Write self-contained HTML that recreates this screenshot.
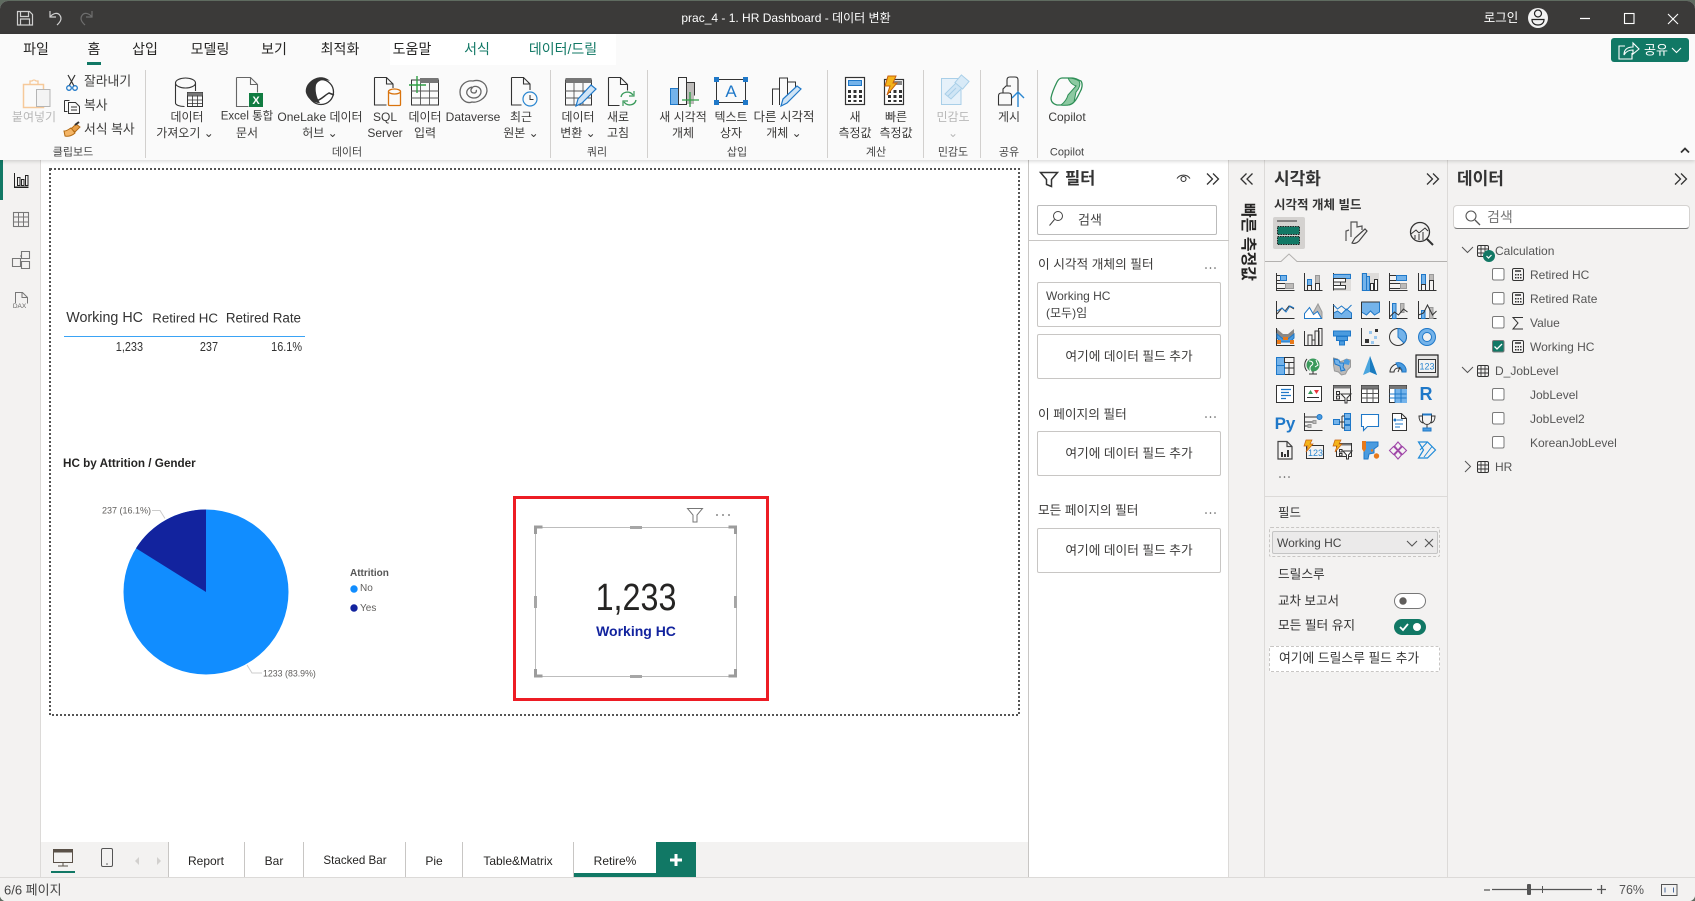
<!DOCTYPE html>
<html lang="ko"><head><meta charset="utf-8"><title>prac_4 - 1. HR Dashboard - 데이터 변환</title>
<style>
html,body{margin:0;padding:0;width:1695px;height:901px;overflow:hidden;background:#5f6b60}
*{box-sizing:border-box}
#a{position:absolute;left:0;top:1px;width:1695px;height:900px;overflow:hidden;border-radius:8px 8px 6px 6px}
#i{position:absolute;left:0;top:-1px;width:1695px;height:901px;background:#fff;font-family:"Liberation Sans","Noto Sans CJK KR",sans-serif;color:#323130;font-size:12px}
#a div,#a span.t{position:absolute}
.t{position:absolute;white-space:nowrap;line-height:1}
.c{transform:translate(-50%,-50%)}
.m{transform:translateY(-50%)}
.r{transform:translate(-100%,-50%)}
.d{transform:translate(-100%,-50%) scaleX(.87);transform-origin:100% 50%}
.tab{font-size:14px;color:#252423}
.rb{font-size:12px;color:#3b3a39}
.gl{font-size:11px;color:#444}
.dim{color:#b8b8b8}
.card{background:#fff;border:1px solid #c8c6c4;border-radius:2px}
.h{font-size:12.7px;color:#3b3a39}
.tr{font-size:12px;color:#555}
.pt{font-size:12px;color:#252423}
svg{position:absolute;left:0;top:0;overflow:visible}
.s{fill:none;stroke:#333;stroke-width:1}
.w{fill:#fff;stroke:#333;stroke-width:1}
.b{fill:#74b3ea;stroke:#1f78c8;stroke-width:1}
.n{fill:none;stroke:#1f78c8;stroke-width:1.4}
.g{fill:#bdbbb9;stroke:#999;stroke-width:1}
.o{fill:#e8791a}
</style></head><body><div id="a"><div id="i">

<!-- backgrounds -->
<div style="left:0;top:0;width:1695px;height:34px;background:#3b3a39"></div>
<div style="left:0;top:34px;width:1695px;height:126px;background:#fafafa;box-shadow:0 1px 4px rgba(0,0,0,.18);z-index:3"></div>
<div style="left:0;top:160px;width:41px;height:741px;background:#f3f2f1;border-right:1px solid #dcdad8"></div>
<div style="left:0;top:160px;width:3px;height:40px;background:#117865"></div>
<div style="left:1028px;top:160px;width:201px;height:717px;background:#fff;border-left:1px solid #c8c6c4;border-right:1px solid #dcdad8"></div>
<div style="left:1229px;top:160px;width:466px;height:717px;background:#f3f2f1"></div>
<div style="left:1264px;top:160px;width:1px;height:717px;background:#dcdad8"></div>
<div style="left:1447px;top:160px;width:1px;height:717px;background:#dcdad8"></div>
<div style="left:41px;top:842px;width:987px;height:35px;background:#f3f2f1"></div>
<div style="left:168px;top:842px;width:488px;height:35px;background:#fff"></div>
<div style="left:0;top:877px;width:1695px;height:24px;background:#f3f2f1;border-top:1px solid #dcdad8"></div>
<div style="left:390px;top:34px;width:51px;height:31px;background:#fff;z-index:3"></div>
<div style="left:441px;top:34px;width:175px;height:31px;background:#fff;z-index:3"></div>

<!-- page border -->
<svg width="1030" height="720"><rect x="50" y="169" width="969" height="546" fill="none" stroke="#555" stroke-width="2" stroke-dasharray="2 2"/></svg>

<!-- z-index wrapper for ribbon -->
<div style="left:0;top:0;width:1695px;height:160px;z-index:5">
<span class="t c" style="left:786px;top:18px;font-size:12px;color:#fff">prac_4 - 1. HR Dashboard - 데이터 변환</span>
<span class="t c" style="left:1501px;top:18px;font-size:12.5px;color:#fff">로그인</span>
<span class="t c tab" style="left:36px;top:49px">파일</span>
<span class="t c tab" style="left:94px;top:49px">홈</span>
<span class="t c tab" style="left:145px;top:49px">삽입</span>
<span class="t c tab" style="left:210px;top:49px">모델링</span>
<span class="t c tab" style="left:274px;top:49px">보기</span>
<span class="t c tab" style="left:340px;top:49px">최적화</span>
<span class="t c tab" style="left:412px;top:49px">도움말</span>
<span class="t c tab" style="left:477px;top:49px;color:#117865">서식</span>
<span class="t c tab" style="left:563px;top:49px;color:#117865">데이터/드릴</span>
<div style="left:87px;top:62px;width:14px;height:3px;background:#117865"></div>
<div style="left:1611px;top:38px;width:78px;height:24px;background:#117865;border-radius:3px"></div>
<span class="t c" style="left:1656px;top:50px;font-size:13px;color:#fff">공유</span>

<span class="t c rb dim" style="left:34px;top:117px">붙여넣기</span>
<span class="t m rb" style="left:84px;top:82px;font-size:12.8px">잘라내기</span>
<span class="t m rb" style="left:84px;top:106px;font-size:12.8px">복사</span>
<span class="t m rb" style="left:84px;top:130px;font-size:12.8px">서식 복사</span>
<span class="t c gl" style="left:73px;top:153px">클립보드</span>

<span class="t c rb" style="left:187px;top:117px">데이터</span><span class="t c rb" style="left:185px;top:133px">가져오기 ⌄</span>
<span class="t c rb" style="left:247px;top:117px;font-size:11.5px">Excel 통합</span><span class="t c rb" style="left:247px;top:133px">문서</span>
<span class="t c rb" style="left:320px;top:117px">OneLake 데이터</span><span class="t c rb" style="left:320px;top:133px">허브 ⌄</span>
<span class="t c rb" style="left:385px;top:117px">SQL</span><span class="t c rb" style="left:385px;top:133px">Server</span>
<span class="t c rb" style="left:425px;top:117px">데이터</span><span class="t c rb" style="left:425px;top:133px">입력</span>
<span class="t c rb" style="left:473px;top:117px">Dataverse</span>
<span class="t c rb" style="left:521px;top:117px">최근</span><span class="t c rb" style="left:521px;top:133px">원본 ⌄</span>
<span class="t c gl" style="left:347px;top:153px">데이터</span>

<span class="t c rb" style="left:578px;top:117px">데이터</span><span class="t c rb" style="left:578px;top:133px">변환 ⌄</span>
<span class="t c rb" style="left:618px;top:117px">새로</span><span class="t c rb" style="left:618px;top:133px">고침</span>
<span class="t c gl" style="left:597px;top:153px">쿼리</span>

<span class="t c rb" style="left:683px;top:117px">새 시각적</span><span class="t c rb" style="left:683px;top:133px">개체</span>
<span class="t c rb" style="left:731px;top:117px">텍스트</span><span class="t c rb" style="left:731px;top:133px">상자</span>
<span class="t c rb" style="left:784px;top:117px;font-size:12.5px">다른 시각적</span><span class="t c rb" style="left:784px;top:133px">개체 ⌄</span>
<span class="t c gl" style="left:737px;top:153px">삽입</span>

<span class="t c rb" style="left:855px;top:117px">새</span><span class="t c rb" style="left:855px;top:133px">측정값</span>
<span class="t c rb" style="left:896px;top:117px">빠른</span><span class="t c rb" style="left:896px;top:133px">측정값</span>
<span class="t c gl" style="left:876px;top:153px">계산</span>
<span class="t c rb dim" style="left:953px;top:117px">민감도</span><span class="t c rb dim" style="left:953px;top:133px">⌄</span>
<span class="t c gl" style="left:953px;top:153px">민감도</span>
<span class="t c rb" style="left:1009px;top:117px">게시</span>
<span class="t c gl" style="left:1009px;top:153px">공유</span>
<span class="t c rb" style="left:1067px;top:117px">Copilot</span>
<span class="t c gl" style="left:1067px;top:153px">Copilot</span>

<div style="left:145px;top:70px;width:1px;height:88px;background:#d2d0ce"></div>
<div style="left:550px;top:70px;width:1px;height:88px;background:#d2d0ce"></div>
<div style="left:647px;top:70px;width:1px;height:88px;background:#d2d0ce"></div>
<div style="left:827px;top:70px;width:1px;height:88px;background:#d2d0ce"></div>
<div style="left:923px;top:70px;width:1px;height:88px;background:#d2d0ce"></div>
<div style="left:980px;top:70px;width:1px;height:88px;background:#d2d0ce"></div>
<div style="left:1037px;top:70px;width:1px;height:88px;background:#d2d0ce"></div>

<svg width="1695" height="160">
<!-- title bar icons -->
<g fill="none" stroke="#d0d0d0" stroke-width="1.2">
<path d="M17.5 11.5h12l3 3v10.500h-15zM20.500 11.500v5h8v-5M20.500 25v-6h9v6"/>
<path d="M50 11v6h6M50 17c3-4 8-5 10-1.500 2 3 1 6-3 9.500"/>
<path stroke="#6e6e6e" d="M92 11v6h-6M92 17c-3-4-8-5-10-1.500-2 3-1 6 3 9.500"/>
</g>
<circle cx="1538" cy="18" r="10" fill="#f2f2f2"/>
<circle cx="1538" cy="13.500" r="3.500" fill="none" stroke="#222" stroke-width="1.200"/>
<path d="M1532 19.500h12c0 3.500-2.500 5.500-6 5.500s-6-2-6-5.500z" fill="none" stroke="#222" stroke-width="1.200"/>
<path d="M1580 18.500h10" stroke="#fff" stroke-width="1.200"/>
<rect x="1624.500" y="13.500" width="9.500" height="10" fill="none" stroke="#fff" stroke-width="1.100"/>
<path d="M1668 14l10 10M1678 14l-10 10" stroke="#fff" stroke-width="1.100"/>
<!-- share -->
<path d="M1625 46h-6v13h13v-6M1624 55c0-6 4-8 9-8v-4l6 6-6 5v-4c-4 0-7 1-9 5z" fill="none" stroke="#fff" stroke-width="1.100"/>
<path d="M1672 48l4.500 4.500 4.500-4.500" fill="none" stroke="#fff" stroke-width="1.100"/>
<path d="M1681 152.500l4-4 4 4" fill="none" stroke="#333" stroke-width="1.800"/>

<!-- paste -->
<rect x="23.500" y="84.500" width="20" height="23" fill="none" stroke="#f6c99a" stroke-width="1.500"/>
<path d="M30 84v-3h2a2.500 2.500 0 0 1 4 0h2v3" fill="none" stroke="#f6c99a" stroke-width="1.300"/>
<rect x="36.500" y="89.500" width="13.500" height="17" fill="#f4f4f4" stroke="#b5b5b5"/>
<!-- scissors -->
<path d="M68 75l6 11M75 75l-6 11" stroke="#333" fill="none" stroke-width="1.200"/>
<circle cx="69" cy="88" r="2.300" fill="none" stroke="#1f78c8" stroke-width="1.300"/><circle cx="75" cy="88" r="2.300" fill="none" stroke="#1f78c8" stroke-width="1.300"/>
<!-- copy -->
<path d="M64.500 100.500h5M64.500 100.500v11h3" fill="none" stroke="#333"/><path d="M68.500 102.500h7l4 4v7h-11zM71 107h6M71 110h6" fill="none" stroke="#333"/>
<!-- format painter -->
<path d="M71 129l5-5 4 3-5 5z" fill="#e8a04a" stroke="#b36a12"/><path d="M64 131c3 0 5-2 7-3l4 5c-2 2-6 4-10 3z" fill="#f4b566" stroke="#b36a12"/><path d="M75 125l4-3" stroke="#333" stroke-width="2"/>
<!-- get data -->
<path d="M175.500 83v20c0 2 4 3.500 9 3.500M175.500 83c0-3 5-5 10-5s10 2 10 5c0 3-5 5-10 5s-10-2-10-5zM195.500 83v8" fill="none" stroke="#333" stroke-width="1.100"/>
<rect x="187.500" y="92.500" width="15" height="14" fill="#fafafa" stroke="#333"/><path d="M187 96h16M187 100h16M187 103.500h16M192.500 92v14M197.500 92v14" stroke="#333" stroke-width=".8"/>
<rect x="187.500" y="92.500" width="15" height="3" fill="#777"/>
<!-- excel -->
<path d="M236.500 77.500h14l7 7v8M236.500 77.500v29h12M250.500 77.500v7h7" fill="none" stroke="#666" stroke-width="1.100"/>
<rect x="249" y="93" width="14" height="14" fill="#107c41"/><text x="256" y="104" text-anchor="middle" font-family="Liberation Sans" font-size="11" font-weight="bold" fill="#fff">X</text>
<!-- onelake -->
<circle cx="321" cy="92" r="12.500" fill="#fff" stroke="#333" stroke-width="1.300"/>
<path d="M311 81c6-5 14-5 19 0-6-2-12-1-14 4-1 5 0 12 4 18-7 0-12-4-14-10-1-4 1-9 5-12z" fill="#333"/>
<path d="M316 101c5-1 9-6 13-8l5 2" fill="none" stroke="#333" stroke-width="1.500"/>
<!-- sql -->
<path d="M374.500 77.500h12l6.500 6.500v4M374.500 77.500v27.500h12M386.500 77.500v6.500h6.500" fill="none" stroke="#333" stroke-width="1.100"/>
<rect x="388.500" y="91" width="12" height="14.500" rx="1" fill="#fafafa" stroke="#d9730d" stroke-width="1.300"/><ellipse cx="394.500" cy="91.500" rx="6" ry="2.500" fill="#fafafa" stroke="#d9730d" stroke-width="1.300"/>
<!-- enter data -->
<rect x="411.500" y="80" width="27" height="25" fill="none" stroke="#333"/><rect x="420" y="78" width="18.500" height="5" fill="#777"/>
<path d="M411 91h28M411 98h28M420.500 83v22M429.500 83v22" stroke="#555" stroke-width=".9"/>
<path d="M409 85h17M417 76v17" stroke="#2f9e44" stroke-width="1.400"/>
<!-- dataverse -->
<path d="M473 81c-7-1-13 4-13 11 0 8 7 12 12 10 5 1 14-3 15-11 0-8-7-12-14-10zM472 87c-4 1-6 4-5 7 2 4 7 5 11 3 4-3 4-8 0-10-2-1-5-1-6 1-2 2-1 5 2 5 2 0 3-2 2-3" fill="none" stroke="#666" stroke-width="1.300"/>
<!-- recent -->
<path d="M511.500 77.500h12l6.500 6.500v6M511.500 77.500v27.500h10M523.500 77.500v6.500h6.500" fill="none" stroke="#333" stroke-width="1.100"/>
<circle cx="530" cy="99" r="7" fill="#fafafa" stroke="#2a86d0" stroke-width="1.200"/><path d="M530 95v4.500h3.500" fill="none" stroke="#333"/>
<!-- transform -->
<rect x="565.500" y="80" width="26" height="25" fill="none" stroke="#333"/><rect x="565.500" y="78" width="26" height="5" fill="#777"/>
<path d="M565 91h27M565 98h27M574 83v22M583 83v22" stroke="#555" stroke-width=".9"/>
<path d="M576 106l2-7 13-14 5 4-14 14z" fill="#cfe4f6" stroke="#1f78c8" stroke-width="1.200"/>
<!-- refresh -->
<path d="M608.500 77.500h12l7 7v6M608.500 77.500v28h11M620.500 77.500v7h7" fill="none" stroke="#333" stroke-width="1.100"/>
<path d="M621 97c1-5 8-7 12-2M636 100c-1 5-8 7-12 2" fill="none" stroke="#3a9a5b" stroke-width="1.400"/><path d="M634 91v5h-5M623 106v-5h5" fill="none" stroke="#3a9a5b" stroke-width="1.200"/>
<!-- new visual -->
<rect x="670.500" y="88.500" width="8" height="16" fill="#74b3ea" stroke="#1f78c8"/><path d="M678.500 104.500v-27h8v27zM686.500 82.500h8v13" fill="none" stroke="#333"/><rect x="687" y="83" width="7" height="21" fill="#bdbbb9"/>
<path d="M682 100h17M690 92v15" stroke="#2f9e44" stroke-width="1.300"/>
<!-- textbox -->
<rect x="716.500" y="79.500" width="29" height="23" fill="none" stroke="#333"/>
<path d="M714 77h5v5h-5zM743 77h5v5h-5zM714 100h5v5h-5zM743 100h5v5h-5z" fill="#1f78c8"/>
<text x="731" y="97" text-anchor="middle" font-family="Liberation Sans" font-size="17" fill="#1f78c8">A</text>
<!-- more visuals -->
<path d="M772.500 105v-16h7v16M779.500 105v-27h8v22M787.500 82h8v10" fill="none" stroke="#333"/>
<path d="M781 106l2-7 14-13 4 3-14 14z" fill="#cfe4f6" stroke="#1f78c8" stroke-width="1.200"/>
<!-- new measure -->
<rect x="845.500" y="77.500" width="19" height="27" fill="#fff" stroke="#333" stroke-width="1.200"/><rect x="848.500" y="80.500" width="13" height="5" fill="#74b3ea" stroke="#1f78c8"/>
<path d="M848 90h3v3h-3zM853.500 90h3v3h-3zM859 90h3v3h-3zM848 95h3v3h-3zM853.500 95h3v3h-3zM859 95h3v3h-3zM848 100h3v2h-3zM853.500 100h3v2h-3zM859 100h3v2h-3z" fill="#333"/>
<!-- quick measure -->
<rect x="884.500" y="79.500" width="19" height="25" fill="#fff" stroke="#333" stroke-width="1.200"/><rect x="890" y="81" width="12" height="4" fill="#888"/>
<path d="M888 90h3v3h-3zM893.500 90h3v3h-3zM899 90h3v3h-3zM888 95h3v3h-3zM893.500 95h3v3h-3zM899 95h3v3h-3zM888 100h3v2h-3zM893.500 100h3v2h-3zM899 100h3v2h-3z" fill="#333"/>
<path d="M888 76h8l-3 7h4l-10 12 3-9h-5z" fill="#f4b41a" stroke="#c9600b"/>
<!-- sensitivity -->
<rect x="941.500" y="78.500" width="19.500" height="26" fill="#e6f1fa" stroke="#a9cfe8"/><path d="M945 94l13-13 6 5-13 13zM948 96l8-8" fill="#cfe5f5" stroke="#a9cfe8"/><rect x="957" y="77" width="10" height="10" transform="rotate(40 962 82)" fill="#d8eaf7" stroke="#a9cfe8"/>
<!-- publish -->
<path d="M998.500 105v-9c0-2 1-3 3-3h7c2 0 3 1 3 3v9zM1003 93v-4l3-3h5M1007 86v-6c0-2 1-3 3-3h5c2 0 3 1 3 3v12" fill="none" stroke="#333" stroke-width="1.100"/>
<path d="M1018 107V92M1012 98l6-6 6 6" fill="none" stroke="#2a86d0" stroke-width="1.400"/>
<!-- copilot -->
<path d="M1062 78h10c4 0 6 2 9 3 2 3 1 8-1 11-3 6-6 13-12 13h-11c-4-1-6-3-6-7 1-6 4-12 6-16 1-2 3-4 5-4z" fill="none" stroke="#2f8f57" stroke-width="1.300"/>
<path d="M1068 78c2 5 5 7 8 8l-8 9c-1 4-3 7-7 10 7 1 11-1 13-3l2-10c3-3 5-8 3-11-3-2-7-3-11-3z" fill="#8cc9a1" stroke="#2f8f57"/>
</svg>
</div>

<!-- left nav -->
<svg width="60" height="330">
<path d="M14.500 173v14h14" fill="none" stroke="#222"/><path d="M14 187.500h14.500" stroke="#222"/>
<path d="M17.500 177.500h2.500v8h-2.500zM21.500 179.500h2.500v6h-2.500zM25.500 175.500h2.500v10h-2.500z" fill="none" stroke="#222"/>
<rect x="13.500" y="212.500" width="15" height="14" fill="none" stroke="#777" stroke-width="1.100"/><path d="M13 217h16M13 222h16M18.500 212v15M23.500 212v15" stroke="#777"/>
<path d="M12.500 258.500h8v8h-8zM21.500 251.500h8v7h-8zM21.500 261.500h8v7h-8zM20 262h2M20 256h2" fill="none" stroke="#777" stroke-width="1.100"/>
<path d="M15.500 303v-10.500h7l5 5v6" fill="none" stroke="#777"/><path d="M22 292.500v5h5" fill="none" stroke="#777"/>
<text x="19.500" y="308" text-anchor="middle" font-family="Liberation Sans" font-size="6.500" fill="#666">DAX</text>
</svg>

<!-- table visual -->
<span class="t r" style="left:143px;top:318px;font-size:14.300px;color:#333">Working HC</span>
<span class="t r" style="left:218px;top:318px;font-size:13.300px;color:#333">Retired HC</span>
<span class="t r" style="left:301px;top:318px;font-size:13.400px;color:#333">Retired Rate</span>
<div style="left:64px;top:336px;width:241px;height:1px;background:#3aa3f5"></div>
<span class="t d" style="left:143px;top:347px;font-size:12.500px;color:#333">1,233</span>
<span class="t d" style="left:218px;top:347px;font-size:12.500px;color:#333">237</span>
<span class="t d" style="left:302px;top:347px;font-size:12.500px;color:#333">16.1%</span>

<!-- pie -->
<span class="t m" style="left:63px;top:464px;font-size:11.700px;font-weight:bold;color:#252423">HC by Attrition / Gender</span>
<svg width="400" height="720">
<circle cx="206" cy="592" r="82.500" fill="#118dff"/>
<path d="M206 592V509.500A82.500 82.500 0 0 0 136 548.300z" fill="#12239e"/>
<path d="M152 510.500h8l5 8M247 665l5 8h10" fill="none" stroke="#ccc"/>
<circle cx="354" cy="589" r="3.700" fill="#118dff"/><circle cx="354" cy="608" r="3.700" fill="#12239e"/>
</svg>
<span class="t m" style="left:102px;top:510.500px;font-size:9px;color:#605e5c">237 (16.1%)</span>
<span class="t m" style="left:263px;top:673.500px;font-size:8.800px;color:#605e5c">1233 (83.9%)</span>
<span class="t m" style="left:350px;top:573.500px;font-size:10px;font-weight:bold;color:#555">Attrition</span>
<span class="t m" style="left:360px;top:589px;font-size:10px;color:#605e5c">No</span>
<span class="t m" style="left:360px;top:608.500px;font-size:10px;color:#605e5c">Yes</span>

<!-- card visual -->
<div style="left:513px;top:496px;width:256px;height:205px;border:3px solid #ed1c24"></div>
<div style="left:535px;top:527px;width:202px;height:150px;border:1px solid #bdbdbd"></div>
<svg width="800" height="720">
<path d="M535.500 534v-7h7M735.500 534v-7h-7M535.500 669v7h7M735.500 669v7h-7" fill="none" stroke="#9c9c9c" stroke-width="3"/>
<rect x="630" y="526" width="12" height="3" fill="#a6a6a6"/><rect x="630" y="675" width="12" height="3" fill="#a6a6a6"/>
<rect x="534" y="596" width="3" height="12" fill="#a6a6a6"/><rect x="734" y="596" width="3" height="12" fill="#a6a6a6"/>
<path d="M687.500 508.500h15l-5.500 6.500v7h-4v-7z" fill="none" stroke="#777"/>
<circle cx="717" cy="515" r=".9" fill="#666"/><circle cx="723" cy="515" r=".9" fill="#666"/><circle cx="729" cy="515" r=".9" fill="#666"/>
</svg>
<span class="t c" style="left:636px;top:598px;font-size:38px;color:#252423;transform:translate(-50%,-50%) scaleX(.85)">1,233</span>
<span class="t c" style="left:636px;top:631px;font-size:14px;font-weight:bold;color:#12239e">Working HC</span>

<!-- filter pane -->
<span class="t m" style="left:1065px;top:179px;font-size:16.500px;font-weight:bold;color:#333">필터</span>
<div class="card" style="left:1037px;top:205px;width:180px;height:30px;border-color:#bbb"></div>
<span class="t m" style="left:1078px;top:220px;font-size:13px;color:#444">검색</span>
<div style="left:1029px;top:240px;width:200px;height:1px;background:#c8c6c4"></div>
<span class="t m h" style="left:1038px;top:265px">이 시각적 개체의 필터</span>
<div class="card" style="left:1037px;top:282px;width:184px;height:45px"></div>
<span class="t m" style="left:1046px;top:296px;font-size:12px;color:#444">Working HC</span>
<span class="t m" style="left:1046px;top:313px;font-size:12px;color:#444">(모두)임</span>
<div class="card" style="left:1037px;top:334px;width:184px;height:45px"></div>
<span class="t c h" style="left:1129px;top:357px">여기에 데이터 필드 추가</span>
<span class="t m h" style="left:1038px;top:415px">이 페이지의 필터</span>
<div class="card" style="left:1037px;top:431px;width:184px;height:45px"></div>
<span class="t c h" style="left:1129px;top:454px">여기에 데이터 필드 추가</span>
<span class="t m h" style="left:1038px;top:511px">모든 페이지의 필터</span>
<div class="card" style="left:1037px;top:528px;width:184px;height:45px"></div>
<span class="t c h" style="left:1129px;top:551px">여기에 데이터 필드 추가</span>

<!-- quick measures collapsed -->
<span class="t c" style="left:1247px;top:242px;font-size:16px;font-weight:bold;color:#252423;transform:translate(-50%,-50%) rotate(90deg)">빠른 측정값</span>

<!-- viz pane text -->
<span class="t m" style="left:1274px;top:179px;font-size:17px;font-weight:bold;color:#333">시각화</span>
<span class="t m" style="left:1274px;top:205px;font-size:12.500px;font-weight:bold;color:#333">시각적 개체 빌드</span>
<div style="left:1273px;top:217px;width:32px;height:32px;background:#d4d2d0;border-radius:2px"></div>
<span class="t m" style="left:1278px;top:513px;font-size:12.500px;color:#333">필드</span>
<div style="left:1269px;top:527px;width:171px;height:30px;border:1px dashed #c8c6c4;border-radius:2px"></div>
<div style="left:1272px;top:531px;width:166px;height:23px;background:#ebeaea;border:1px solid #c4c4c4;border-radius:2px"></div>
<span class="t m" style="left:1277px;top:543px;font-size:12px;color:#444">Working HC</span>
<span class="t m" style="left:1278px;top:575px;font-size:12.700px;color:#333">드릴스루</span>
<span class="t m" style="left:1278px;top:601px;font-size:12.500px;color:#333">교차 보고서</span>
<span class="t m" style="left:1278px;top:626px;font-size:12.700px;color:#333">모든 필터 유지</span>
<div style="left:1269px;top:646px;width:171px;height:26px;background:#fff;border:1px dashed #c8c6c4;border-radius:2px"></div>
<span class="t m" style="left:1279px;top:659px;font-size:12.800px;color:#333">여기에 드릴스루 필드 추가</span>
<div style="left:1265px;top:496px;width:182px;height:1px;background:#dcdad8"></div>

<!-- data pane text -->
<span class="t m" style="left:1457px;top:179px;font-size:17px;font-weight:bold;color:#333">데이터</span>
<div style="left:1453px;top:205px;width:237px;height:24px;background:#fff;border:1px solid #d5d3d1;border-bottom:1.500px solid #777;border-radius:4px"></div>
<span class="t m" style="left:1487px;top:217px;font-size:14px;color:#777">검색</span>
<span class="t m tr" style="left:1495px;top:251px">Calculation</span>
<span class="t m tr" style="left:1530px;top:275px">Retired HC</span>
<span class="t m tr" style="left:1530px;top:299px">Retired Rate</span>
<span class="t m tr" style="left:1530px;top:323px">Value</span>
<span class="t m tr" style="left:1530px;top:347px">Working HC</span>
<span class="t m tr" style="left:1495px;top:371px">D_JobLevel</span>
<span class="t m tr" style="left:1530px;top:395px">JobLevel</span>
<span class="t m tr" style="left:1530px;top:419px">JobLevel2</span>
<span class="t m tr" style="left:1530px;top:443px">KoreanJobLevel</span>
<span class="t m tr" style="left:1495px;top:467px">HR</span>

<!-- pane svg -->
<svg width="1695" height="700">
<defs>
<g id="tb"><rect x=".5" y=".5" width="11" height="11" rx="1.500" fill="none" stroke="#333"/><path d="M0 4h12M0 8h12M4 0v12M8 0v12" stroke="#333" stroke-width=".9"/></g>
<g id="calc"><rect x=".5" y=".5" width="11" height="12" rx="1.500" fill="none" stroke="#333"/><path d="M3 3h6" stroke="#333" stroke-width="1.500"/><path d="M3 6h1.500v1.500H3zM5.500 6H7v1.500H5.500zM8 6h1.500v1.500H8zM3 9h1.500v1.500H3zM5.500 9H7v1.500H5.500zM8 9h1.500v1.500H8z" fill="#333"/></g>
<g id="dbl"><path d="M0 0l5.500 5.500L0 11M6 0l5.500 5.500L6 11" fill="none" stroke="#333" stroke-width="1.300"/></g>
<g id="dbr"><path d="M5.500 0L0 5.500 5.500 11M11.500 0L6 5.500 11.500 11" fill="none" stroke="#333" stroke-width="1.300"/></g>
<g id="dots"><circle cx="1" cy="1" r=".8" fill="#555"/><circle cx="5.500" cy="1" r=".8" fill="#555"/><circle cx="10" cy="1" r=".8" fill="#555"/></g>
<rect id="cb" width="11.500" height="11.500" rx="1.500" fill="#fff" stroke="#7a7a7a"/>
</defs>
<!-- filter pane icons -->
<path d="M1040.500 172.500h17l-6 7v7l-5-2v-5z" fill="none" stroke="#333" stroke-width="1.500"/>
<path d="M1177 178.500c3-4.500 10-4.500 13 0M1181 179a2.500 2.500 0 1 0 5 0a2.500 2.500 0 1 0-5 0z" fill="none" stroke="#333" stroke-width="1.100"/>
<use href="#dbl" x="1207" y="173.500"/>
<circle cx="1058" cy="216" r="4.500" fill="none" stroke="#444"/><path d="M1054.500 219.500l-5 6" stroke="#444"/>
<use href="#dots" x="1205" y="267"/><use href="#dots" x="1205" y="416"/><use href="#dots" x="1205" y="512"/>
<use href="#dbr" x="1241" y="173.500"/>
<use href="#dbl" x="1427" y="173.500"/>
<use href="#dbl" x="1675" y="173.500"/>
<!-- build visual tabs -->
<path d="M1277 221h20" stroke="#333"/>
<rect x="1277.500" y="226.500" width="22" height="8" fill="#117865" stroke="#222" stroke-dasharray="1.500 1"/><rect x="1277.500" y="236.500" width="22" height="8" fill="#117865" stroke="#222" stroke-dasharray="1.500 1"/>
<path d="M1346 241v-10l3-1M1351 237v-15h6v5l5-1v4" fill="none" stroke="#555" stroke-width="1.200"/><path d="M1352 243l3-5 10-9 2 2-8 10c-2 2-5 3-7 2z" fill="#f3f2f1" stroke="#444" stroke-width="1.200"/>
<circle cx="1420" cy="232" r="9.500" fill="#f3f2f1" stroke="#333" stroke-width="1.300"/><path d="M1411 234l5-4 3 3 6-5 3 3" fill="none" stroke="#333"/><path d="M1415 239v-4M1419 240v-6M1423 240v-8" stroke="#333"/><path d="M1427 239l6 6" stroke="#333" stroke-width="2"/>
<path d="M1265 261.500h16l8-7.500 8 7.500h150" fill="none" stroke="#b3b1af"/>
<!-- field & toggles -->
<path d="M1407 541l5 5 5-5" fill="none" stroke="#555" stroke-width="1.100"/><path d="M1425 539l8 8M1433 539l-8 8" stroke="#555" stroke-width="1.100"/>
<rect x="1394.500" y="593.500" width="31" height="15" rx="7.500" fill="#fff" stroke="#777"/><circle cx="1403" cy="601" r="3.700" fill="#605e5c"/>
<rect x="1394" y="619" width="32" height="16" rx="8" fill="#117865"/><circle cx="1417" cy="627" r="4" fill="#fff"/><path d="M1400 627l3 3 5-6" fill="none" stroke="#fff" stroke-width="1.800"/>
<!-- data pane icons -->
<circle cx="1471" cy="216" r="5" fill="none" stroke="#555" stroke-width="1.100"/><path d="M1475 220l5 5" stroke="#555" stroke-width="1.300"/>
<path d="M1462 247l5.500 5.500 5.500-5.500M1462 367l5.500 5.500 5.500-5.500" fill="none" stroke="#555"/>
<path d="M1465 461l5.500 5.500-5.500 5.500" fill="none" stroke="#555"/>
<use href="#tb" x="1477" y="245"/><use href="#tb" x="1477" y="365"/><use href="#tb" x="1477" y="461"/>
<circle cx="1489" cy="256" r="6" fill="#117865"/><path d="M1486.500 256l2 2 3-3" fill="none" stroke="#fff" stroke-width="1.200"/>
<use href="#cb" x="1492.500" y="268.500"/><use href="#cb" x="1492.500" y="292.500"/><use href="#cb" x="1492.500" y="316.500"/>
<rect x="1492.500" y="340.500" width="11.500" height="11.500" rx="1.500" fill="#117865" stroke="#7a7a7a"/><path d="M1494.500 346.500l2.500 2.500 5-5" fill="none" stroke="#fff" stroke-width="1.300"/>
<use href="#cb" x="1492.500" y="388.500"/><use href="#cb" x="1492.500" y="412.500"/><use href="#cb" x="1492.500" y="436.500"/>
<use href="#calc" x="1512" y="268"/><use href="#calc" x="1512" y="292"/><use href="#calc" x="1512" y="340"/>
<path d="M1523 317.500h-10l5 5.500-5 6h10" fill="none" stroke="#333"/>

<!-- viz grid row 1 (y273) -->
<g transform="translate(1276,273)"><path class="s" d="M.5 0v17.500h18"/><rect class="s" x=".5" y="2.500" width="4" height="5"/><rect class="b" x="4.500" y="2.500" width="6" height="5"/><rect class="s" x=".5" y="10.500" width="9" height="5"/><rect class="g" x="9.500" y="10.500" width="8" height="5"/></g>
<g transform="translate(1304,273)"><path class="s" d="M.5 0v17.500h18"/><rect class="b" x="3.500" y="6.500" width="4" height="6"/><rect class="s" x="3.500" y="12.500" width="4" height="5"/><rect class="g" x="11.500" y="2.500" width="4" height="8"/><rect class="s" x="11.500" y="10.500" width="4" height="7"/></g>
<g transform="translate(1333,273)"><rect x="0" y="0" width="18" height="18" fill="#dedcda"/><path class="s" d="M.5 0v17.500"/><rect class="b" x=".5" y="1.500" width="17" height="4"/><rect class="w" x=".5" y="5.500" width="12" height="3.500"/><rect x=".5" y="9" width="7" height="3.500" style="fill:#eee;stroke:#333"/><rect class="w" x=".5" y="12.500" width="12" height="3.500"/></g>
<g transform="translate(1361,273)"><rect x="0" y="0" width="18" height="18" fill="#dedcda"/><rect class="b" x="1.500" y=".5" width="4" height="17"/><rect class="b" x="5.500" y="3.500" width="3" height="14"/><rect class="w" x="9.500" y="10.500" width="3" height="7"/><rect class="w" x="13.500" y="6.500" width="3" height="11"/></g>
<g transform="translate(1389,273)"><path class="s" d="M.5 0v17.500h18"/><rect class="s" x=".5" y="2.500" width="7" height="5"/><rect class="b" x="7.500" y="2.500" width="10" height="5"/><rect class="s" x=".5" y="10.500" width="11" height="5"/><rect class="g" x="11.500" y="10.500" width="6" height="5"/></g>
<g transform="translate(1418,273)"><path class="s" d="M.5 0v17.500h18"/><rect class="b" x="3.500" y="1.500" width="4" height="10"/><rect class="s" x="3.500" y="11.500" width="4" height="6"/><rect class="g" x="11.500" y="1.500" width="4" height="6"/><rect class="s" x="11.500" y="7.500" width="4" height="10"/></g>
<!-- row 2 (y301) -->
<g transform="translate(1276,301)"><path class="s" d="M.5 0v17.500h18"/><path class="s" d="M1 13l5-6 3 3 4-5 5 3"/><path d="M1 10l5-3 4 4 4-6 4 2" fill="none" stroke="#1f78c8"/></g>
<g transform="translate(1304,301)"><path d="M1 17l5-7 3 2 5-9 4 8v6z" class="g"/><path d="M.5 17.500v-5l5-6 4 7 4-3 4 7z" fill="#fff" stroke="#1f78c8"/><path d="M.5 17.500h17" stroke="#1f78c8"/></g>
<g transform="translate(1333,301)"><path class="b" d="M.5 12V17.500h18V12l-5-4-5 5-4-3z"/><path class="s" d="M.5 3v14.500h18"/><path d="M.5 4l4 4 4-3 5 4 5-5" fill="none" stroke="#1f78c8"/></g>
<g transform="translate(1361,301)"><path class="b" d="M.5 1v10l5 3 4-4 4 4 5-3V1z"/><path class="s" d="M.5 1h18M.5 1v16.500h18"/></g>
<g transform="translate(1389,301)"><path class="s" d="M.5 0v17.500h18"/><rect class="b" x="3.500" y="2.500" width="3.500" height="15"/><rect class="g" x="11.500" y="2.500" width="3.500" height="9"/><path class="s" d="M.5 16l5-5 4 3 5-6 4 3"/></g>
<g transform="translate(1418,301)"><path class="s" d="M.5 0v17.500h18"/><rect class="b" x="3.500" y="9.500" width="3.500" height="8"/><rect class="g" x="11.500" y="6.500" width="3.500" height="11"/><path class="s" d="M.5 14l5-2 4-8 5 10 4-4"/></g>
<!-- row 3 (y328) -->
<g transform="translate(1276,328)"><path class="s" d="M.5 0v17.500h18"/><path d="M1 1l6 5h5l6-5v5l-6 6H7L1 6z" fill="#8a8886"/><path d="M1 6l6 5h5l6-5v4l-4 4h-9l-4-4z" fill="#4a9bdf" stroke="#1f78c8"/><path d="M1 12h4v4H1zM14 12h4v4h-4zM7 9h5v3H7z" fill="#e8791a"/></g>
<g transform="translate(1304,328)"><path class="s" d="M.5 3v14.500h18M4 17V7h4v10M8 12h3v5M11 12V3h4v14"/><rect class="s" x="14.500" y=".5" width="3.500" height="17"/></g>
<g transform="translate(1333,328)"><path d="M.5 3h17v5h-17z M3.500 8.500h11v4h-11z M6.500 13h5v4h-5z" fill="#4a9bdf" stroke="#1f78c8"/></g>
<g transform="translate(1361,328)"><path class="s" d="M.5 0v17.500h18"/><rect x="4" y="11" width="4" height="4" fill="#333"/><rect x="8" y="3" width="3" height="3" fill="#9ac8ef"/><rect x="14" y="1" width="3" height="3" fill="#333"/><rect x="13" y="8" width="3" height="3" fill="#9ac8ef"/><rect x="10" y="13" width="3" height="3" fill="#9ac8ef"/></g>
<g transform="translate(1389,328)"><circle class="s" cx="9" cy="9" r="8.500"/><path class="b" d="M9 .5a8.500 8.500 0 0 1 6 14.500L9 9z"/></g>
<g transform="translate(1418,328)"><circle cx="9" cy="9" r="6.500" fill="none" stroke="#74b3ea" stroke-width="4"/><circle cx="9" cy="9" r="8.500" fill="none" stroke="#1f78c8"/><circle cx="9" cy="9" r="4.500" fill="none" stroke="#1f78c8"/></g>
<!-- row 4 (y357) -->
<g transform="translate(1276,357)"><rect x=".5" y=".5" width="17.500" height="17" fill="none" stroke="#333"/><rect class="b" x=".5" y=".5" width="8" height="8"/><rect class="b" x=".5" y="8.500" width="8" height="9"/><path class="s" d="M8.500 5.500h9.500M13 5.500v12M8.500 11h9.500"/><rect x="8.500" y=".5" width="9.500" height="5" fill="none" stroke="#333"/></g>
<g transform="translate(1304,357)"><circle cx="9" cy="8" r="6.500" fill="#3a9a5b"/><path d="M5 4c3 0 5 2 3 4-2 1-3 4-1 6M12 3l2 5-3 2" stroke="#fff" fill="none"/><path class="s" d="M3 2a9 9 0 0 0 0 12M5 17h8M9 14v3"/></g>
<g transform="translate(1333,357)"><path d="M.5 1l4 1 1 3 4-1 4-2 4 1v7l-3 3-2 4-4 1-3-3-4-1-1-6z" class="g"/><path class="b" d="M1 2l5 1 1 3h4l-1 4 2 3-4 1-1-5-5-2z"/><path d="M11 3l3-1 3 2-1 4-5-1z" fill="#4a9bdf"/></g>
<g transform="translate(1361,357)"><path d="M9 -1l-7 19 7-3 7 3z" fill="#4aa5de"/><path d="M9 -1v16l7 3z" fill="#1a7bbf"/></g>
<g transform="translate(1389,357)"><path d="M1 15a8 8 0 0 1 16 0h-4a4 4 0 0 0-8 0z" fill="none" stroke="#333"/><path d="M7 6a8 8 0 0 1 10 9h-4a4 4 0 0 0-4-5z" fill="#4a9bdf" stroke="#1f78c8"/><path d="M9 15l2-5" stroke="#333"/></g>
<g transform="translate(1415,354)"><rect x="1" y="1" width="22" height="22" fill="#e6e5e4" stroke="#222" stroke-width="1.200"/><rect x="3.500" y="5.500" width="17" height="13" fill="#f3f2f1" stroke="#333"/><text x="12" y="15.500" text-anchor="middle" font-family="Liberation Sans" font-size="9" fill="#2a86d0">123</text></g>
<!-- row 5 (y385) -->
<g transform="translate(1276,385)"><rect class="w" x=".5" y=".5" width="17" height="17"/><path d="M5 4.500h10M5 7.500h8M5 10.500h10M5 13.500h5" stroke="#1f78c8" stroke-width="1.300"/></g>
<g transform="translate(1304,385)"><rect class="w" x=".5" y="1.500" width="17" height="15"/><path d="M4 9l2.500-4 2.500 4z" fill="#3a9a5b"/><path d="M10 5h5l-2.500 4z" fill="#e8343c"/><path d="M3 12.500h12" stroke="#333"/></g>
<g transform="translate(1333,385)"><rect class="s" x=".5" y=".5" width="17" height="15"/><rect x=".5" y=".5" width="17" height="3" fill="#777"/><rect class="s" x="3.500" y="6.500" width="3" height="3"/><rect class="s" x="3.500" y="11" width="3" height="3"/><path class="w" d="M8 9h10l-4 4v5h-2v-5z"/></g>
<g transform="translate(1361,385)"><rect class="w" x=".5" y=".5" width="17" height="17"/><path d="M.5 4h17M.5 8.500h17M.5 13h17M6 4v13.500M12 4v13.500" stroke="#555" fill="none"/><rect x=".5" y=".5" width="17" height="3" fill="#777"/></g>
<g transform="translate(1389,385)"><rect class="w" x=".5" y=".5" width="17" height="17"/><rect x="6" y="4" width="12" height="14" fill="#74b3ea"/><path d="M.5 9h17M.5 13h17M6 4v13.500M12 4v13.500" stroke="#1f78c8" fill="none"/><rect x=".5" y=".5" width="17" height="3.500" fill="#777"/></g>
<text x="1426" y="400" text-anchor="middle" font-family="Liberation Sans" font-size="18" font-weight="bold" fill="#1f78c8">R</text>
<!-- row 6 (y413) -->
<text x="1285" y="429" text-anchor="middle" font-family="Liberation Sans" font-size="17" font-weight="bold" fill="#1f78c8">Py</text>
<g transform="translate(1304,413)"><path class="s" d="M.5 0v17.500h18M.5 4h14M.5 9h9M.5 13h4"/><circle cx="15.500" cy="4" r="2.500" fill="#4a9bdf" stroke="#1f78c8"/><rect class="g" x="9" y="7.500" width="3" height="3"/><rect class="g" x="4" y="11.500" width="3" height="3"/></g>
<g transform="translate(1333,413)"><rect class="b" x=".5" y="6.500" width="6" height="5"/><rect class="b" x="11.500" y=".5" width="6" height="5"/><rect class="b" x="11.500" y="6.500" width="6" height="5"/><rect class="b" x="11.500" y="12.500" width="6" height="5"/><path class="s" d="M6.500 9h5M9 3v12M9 3h2.500M9 15h2.500"/></g>
<g transform="translate(1361,413)"><path d="M.5 1.500h17v12H6.500l-4 4v-4H.5z" fill="#fff" stroke="#1f78c8" stroke-width="1.100"/></g>
<g transform="translate(1390,413)"><path class="w" d="M2.500 .5h9l5 5v12h-14zM11.500 .5v5h5"/><circle cx="5" cy="7" r="1.500" fill="#1f78c8"/><path d="M7 7h6M5 11h8M5 14h5" stroke="#1f78c8"/></g>
<g transform="translate(1418,413)"><path class="s" d="M4.500 1h9v6a4.500 4.500 0 0 1-9 0zM4.500 3H1c0 4 1 6 4 7M13.500 3H17c0 4-1 6-4 7M9 12v3"/><path d="M4.500 1.500h9" stroke="#1f78c8" stroke-width="2"/><rect x="5" y="15" width="8" height="3" fill="#4a9bdf" stroke="#1f78c8"/></g>
<!-- row 7 (y441) -->
<g transform="translate(1276,441)"><path d="M2 .5h9l5 5v12.500H2zM11 .5v5h5" fill="#f3f2f1" stroke="#444" stroke-width="1.200"/><path d="M5 11h2v5H5zM8 13h2v3H8zM11 9h2v7h-2z" fill="#333"/></g>
<g transform="translate(1303,440)"><rect class="s" x="3.500" y="5.500" width="17" height="13"/><text x="12.500" y="16" text-anchor="middle" font-family="Liberation Sans" font-size="9" fill="#2a86d0">123</text><path d="M3 0h6l-2 4h3l-7 8 2-6H1z" fill="#f4b41a" stroke="#c9600b" stroke-width=".7"/></g>
<g transform="translate(1332,440)"><rect class="s" x="4.500" y="3.500" width="15" height="13"/><rect x="8" y="3.500" width="11" height="2" fill="#777"/><rect class="s" x="7.500" y="9.500" width="2.500" height="2.500"/><rect class="s" x="7.500" y="13.500" width="2.500" height="2.500"/><path class="w" d="M11 11h9l-3.500 4v4h-2v-4z"/><path d="M3 0h6l-2 4h3l-7 8 2-6H1z" fill="#f4b41a" stroke="#c9600b" stroke-width=".7"/></g>
<g transform="translate(1361,441)"><path d="M3 1h14v4l-4 3v4l-5 1-1 5H3z" fill="#4a9bdf" stroke="#1f78c8"/><path d="M1 0h4v8l-2 3-2-3z" fill="#e8791a"/><circle cx="15.500" cy="15" r="2.700" fill="#e8791a"/><circle cx="11" cy="9.500" r="1.200" fill="#e8791a"/></g>
<g transform="translate(1389,441)"><path d="M9 1l3.500 4-3.500 4-3.500-4zM4.500 5.500l4 4-4 4-4-4zM13.500 5.500l4 4-4 4-4-4zM9 10l3.500 4-3.500 4-3.500-4z" fill="none" stroke="#a046a8" stroke-width="1.100"/></g>
<g transform="translate(1418,441)"><path d="M.5 1h9l8 8-8 8h-9l5-8z" fill="none" stroke="#1f8ad8" stroke-width="1.200"/><path d="M9 1.500L2 9M14 5.500L6 16" stroke="#1f8ad8"/></g>
<use href="#dots" x="1279" y="476"/>
</svg>

<!-- bottom strip -->
<div style="left:51px;top:871px;width:24px;height:2px;background:#117865"></div>
<svg width="720" height="901">
<rect x="53.500" y="849.500" width="19" height="13" fill="#f3f2f1" stroke="#5a5148"/><rect x="54" y="850" width="18" height="2.500" fill="#5a5148"/><path d="M63 862.500v3M58 866h10" stroke="#5a5148"/>
<rect x="101.500" y="848.500" width="11" height="18" rx="1.500" fill="none" stroke="#555"/><circle cx="107" cy="864" r=".8" fill="#555"/>
<path d="M139 857l-4 4 4 4z" fill="#d2d0ce"/><path d="M157 857l4 4-4 4z" fill="#d2d0ce"/>
<path d="M168.500 842v35M244.500 842v35M303.500 842v35M405.500 842v35M462.500 842v35M573.500 842v35" stroke="#c8c6c4"/>
<rect x="574" y="873" width="82" height="4" fill="#117865"/>
<rect x="656" y="842" width="40" height="35" fill="#117865"/>
<path d="M676 854v12M670 860h12" stroke="#fff" stroke-width="3"/>
</svg>
<span class="t c pt" style="left:206px;top:861px">Report</span>
<span class="t c pt" style="left:274px;top:861px">Bar</span>
<span class="t c pt" style="left:355px;top:861px;font-size:11.600px">Stacked Bar</span>
<span class="t c pt" style="left:434px;top:861px">Pie</span>
<span class="t c pt" style="left:518px;top:861px">Table&amp;Matrix</span>
<span class="t c pt" style="left:615px;top:861px">Retire%</span>
<span class="t m" style="left:4px;top:890px;font-size:13px;color:#444">6/6 페이지</span>
<svg width="1695" height="901">
<path d="M1484 890h6M1492 889.500h100" stroke="#555" stroke-width="1.300"/>
<rect x="1527" y="884" width="4" height="11" rx="1" fill="#555"/><path d="M1542.500 886v7" stroke="#555"/>
<path d="M1597 889.500h9M1601.500 885v9" stroke="#555" stroke-width="1.300"/>
<rect x="1661.500" y="884.500" width="15.500" height="11" fill="none" stroke="#555"/>
<path d="M1665 887.500v5M1673.500 887.500v5" stroke="#4a6a9a"/>
</svg>
<span class="t m" style="left:1619px;top:890px;font-size:12.500px;color:#555">76%</span>
</div></div></body></html>
